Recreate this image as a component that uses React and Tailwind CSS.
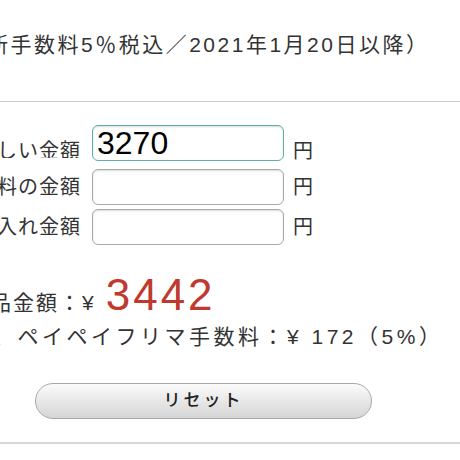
const jp = { fontFamily: '"Liberation Sans", "Noto Sans CJK JP", "Noto Sans", sans-serif' };
const latin = { fontFamily: '"Liberation Sans", Arial, sans-serif' };

const Row = ({ label, value, focused, className }) => (
  <div className={`flex items-center ${className || ""}`}>
    <div className="w-[80px] flex justify-end overflow-hidden">
      <span
        className={`whitespace-nowrap text-[20px] tracking-[1px] mr-[-1px] text-[#333] ${
          focused ? "translate-y-[8px]" : ""
        }`}
      >
        {label}
      </span>
    </div>
    <input
      readOnly
      value={value}
      className={`ml-[12px] w-[192px] h-[36px] rounded-[6px] border bg-white px-[4px] text-[32px] text-black outline-none shadow-[inset_0_1px_2px_rgba(0,0,0,0.15)] ${
        focused ? "border-[#5db0a5] shadow-[0_0_2px_rgba(93,176,165,0.6)]" : "border-[#aaa]"
      }`}
      style={latin}
    />
    <span
      className={`ml-[9px] text-[20px] text-[#333] ${focused ? "translate-y-[8px]" : ""}`}
    >
      円
    </span>
  </div>
);

export default function App() {
  return (
    <div className="w-[460px] h-[460px] overflow-hidden bg-white" style={jp}>
      {/* header note, cut at the left edge */}
      <p className="mt-[33px] ml-[-201px] whitespace-nowrap text-[21px] leading-[24px] tracking-[2.5px] text-[#333]">
        （ペイペイフリマ新手数料5％税込／2021年1月20日以降）
      </p>
      <div className="mt-[44px] h-px bg-[#ccc]" />

      <div className="mt-[23px]">
        <Row label="欲しい金額" value="3270" focused />
        <Row label="手数料の金額" value="" className="mt-[8px]" />
        <Row label="仕入れ金額" value="" className="mt-[4px]" />
      </div>

      {/* result */}
      <div className="mt-[28px] ml-[-33px] flex items-baseline whitespace-nowrap text-[#333]">
        <span className="text-[21px] tracking-[2px]">出品金額：¥</span>
        <span
          className="ml-[10px] text-[44px] leading-[44px] tracking-[3px] text-[#c0392f]"
          style={latin}
        >
          3442
        </span>
      </div>
      <p className="mt-[2px] ml-[-56px] whitespace-nowrap text-[21px] tracking-[3.5px] text-[#333]">
        うち、ペイペイフリマ手数料：¥ 172（5%）
      </p>

      <div className="mt-[31px] ml-[35px] w-[337px]">
        <button className="w-full h-[36px] rounded-full border border-[#a8a8a8] bg-gradient-to-b from-[#fbfbfb] to-[#d5d5d5] text-[17px] font-medium tracking-[3px] text-[#222]">
          リセット
        </button>
      </div>

      <div className="mt-[23px] h-[2px] bg-[#d6d6d6]" />
    </div>
  );
}
